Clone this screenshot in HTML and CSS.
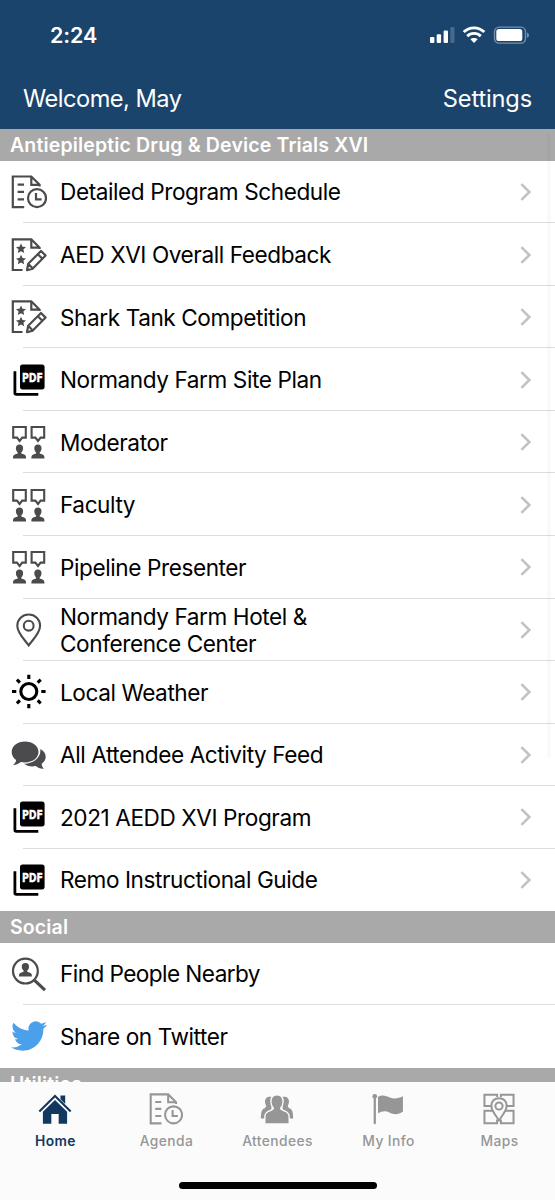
FILE: index.html
```html
<!DOCTYPE html>
<html lang="en">
<head>
<meta charset="utf-8">
<title>Event Home</title>
<link rel="stylesheet" href="styles.css">
</head>
<body>
<svg class="sprite" aria-hidden="true">
  <symbol id="agenda" viewBox="0 0 36 36">
    <g fill="none" stroke="currentColor" stroke-width="2.2">
      <path d="M13.2 33.2H1.8V2.5H20.3L28.6 10.8V12.6M20.3 2.5V10.8H28.6M6.6 10.6H13M6.6 17.9H13M6.6 25.4H13"/>
      <circle cx="26" cy="24.2" r="9"/>
      <path d="M25 19V25.4H30.6"/>
    </g>
  </symbol>
  <symbol id="survey" viewBox="0 0 36 36">
    <path fill="none" stroke="currentColor" stroke-width="2.2" d="M11.5 33H1.8V2.3H20.3L28.6 10.6V12M20.3 2.3V10.6H28.6"/>
    <path id="star" fill="currentColor" d="M10 6.5l1.5 3.2 3.5.4-2.6 2.4.8 3.5-3.2-1.8-3.2 1.8.8-3.5-2.6-2.4 3.5-.4z"/>
    <use href="#star" y="11.3"/>
    <path fill="none" stroke="currentColor" stroke-width="2.2" stroke-linejoin="round" d="M16 33.2L17.2 26.8L30 14L34.6 18.6L21.8 31.6ZM17.2 26.8L21.8 31.6M26.8 17.2L31.4 21.8"/>
  </symbol>
  <symbol id="pdf" viewBox="0 0 36 36">
    <rect x="9" y="2.4" width="24.6" height="25" rx="2.6"/>
    <path fill="none" stroke="#000" stroke-width="2.8" d="M3.9 9.2V31Q3.9 32.3 5.2 32.3H27.3"/>
  </symbol>
  <symbol id="speakers" viewBox="0 0 36 36">
    <g id="speaker">
      <path fill="none" stroke="currentColor" stroke-width="2.1" d="M2.2 3H14.8V13.6H11.2L8.6 17L6 13.6H2.2Z"/>
      <path fill="currentColor" d="M8.5 20.6c2.6 0 3.7 1.7 3.6 3.9c-.1 1.9-1 3.2-1.8 4.1v.8c1.9.7 4.3 1.1 4.6 3l.2 2H1.9l.2-2c.3-1.9 2.7-2.3 4.6-3v-.8c-.8-.9-1.7-2.2-1.8-4.1c-.1-2.2 1-3.9 3.6-3.9z"/>
    </g>
    <use href="#speaker" x="18.4"/>
  </symbol>
  <symbol id="pin" viewBox="0 0 36 36">
    <g fill="none" stroke="currentColor" stroke-width="2.1">
      <path d="M17.7 33.4C13.5 27.5 6.3 21 6.3 13.7C6.3 7.3 11.4 2.5 17.7 2.5S29.1 7.3 29.1 13.7C29.1 21 21.9 27.5 17.7 33.4Z"/>
      <circle cx="17.7" cy="13.7" r="4.9"/>
    </g>
  </symbol>
  <symbol id="sun" viewBox="0 0 36 36">
    <g fill="none" stroke="#000" stroke-width="3.1">
      <circle cx="17.8" cy="17.5" r="8"/>
      <path d="M17.8 .7V5M17.8 30V34.3M1 17.5H5.3M30.3 17.5H34.6M5.9 5.6L8.9 8.6M26.7 26.4L29.7 29.4M5.9 29.4L8.9 26.4M26.7 8.6L29.7 5.6"/>
    </g>
  </symbol>
  <symbol id="chat" viewBox="0 0 36 36">
    <path fill="currentColor" d="M29.2 12.1C32.7 13.9 34.7 16.6 34.7 19.8C34.7 22.7 33.2 25 30.6 26.7C30.8 29 31.6 30.5 33.1 31.6C29.8 32 27.1 31 24.6 29.1C20 30 15.8 29 13 26.8C22 26.8 30.7 20.4 29.2 12.1Z"/>
    <path fill="currentColor" d="M14 4.6C21.6 4.6 27.5 9.1 27.5 15S21.6 25.4 14 25.4C12.5 25.4 11.1 25.2 9.8 24.9C7.5 27 5 28 2.1 28C3.8 26.6 4.9 25.1 5.1 23C2.4 21.2 .7 18.3 .7 15C.7 9.1 6.4 4.6 14 4.6Z"/>
  </symbol>
  <symbol id="find" viewBox="0 0 36 36">
    <circle cx="14.4" cy="15.1" r="12.4" fill="none" stroke="currentColor" stroke-width="2.2"/>
    <path fill="none" stroke="currentColor" stroke-width="3.2" d="M23.6 24.4L34 34.2"/>
    <path fill="currentColor" d="M14.4 7c2.6 0 3.7 1.7 3.6 3.9c-.1 1.7-1 2.9-1.8 3.7v1.2c1.9.7 4.2 1 4.5 2.7l.2 2H7.9l.2-2c.3-1.7 2.6-2 4.5-2.7v-1.2c-.8-.8-1.7-2-1.8-3.7C10.7 8.7 11.8 7 14.4 7z"/>
  </symbol>
  <symbol id="bird" viewBox="0 0 24 24">
    <path fill="#4aa0eb" d="M23.953 4.57a10 10 0 01-2.825.775 4.958 4.958 0 002.163-2.723c-.951.555-2.005.959-3.127 1.184a4.92 4.92 0 00-8.384 4.482C7.69 8.095 4.067 6.13 1.64 3.162a4.822 4.822 0 00-.666 2.475c0 1.71.87 3.213 2.188 4.096a4.904 4.904 0 01-2.228-.616v.06a4.923 4.923 0 003.946 4.827 4.996 4.996 0 01-2.212.085 4.936 4.936 0 004.604 3.417 9.867 9.867 0 01-6.102 2.105c-.39 0-.779-.023-1.17-.067a13.995 13.995 0 007.557 2.209c9.053 0 13.998-7.496 13.998-13.985 0-.21 0-.42-.015-.63A9.935 9.935 0 0024 4.59z"/>
  </symbol>
  <symbol id="chevron" viewBox="0 0 12 18">
    <path fill="none" stroke="#c2c2c4" stroke-width="2.5" d="M1.4 1.2L9.4 9L1.4 16.8"/>
  </symbol>
  <symbol id="home" viewBox="0 0 36 36">
    <path fill="none" stroke="currentColor" stroke-width="2.2" d="M1.4 20.6L18 4.2L34.6 20.6"/>
    <path fill="currentColor" d="M23.8 3.6H28.8V12.6L23.8 7.6ZM18 8.4L30.8 20.8V33.6H21.9V23.4H14.1V33.6H5.2V20.8Z"/>
  </symbol>
  <symbol id="people" viewBox="0 0 36 36">
    <path id="sidePerson" fill="currentColor" d="M12.5 5.3C8.1 3.9 5.2 6.4 5.3 10.2C5.4 12.6 6.6 13.6 6.5 15.2C6.2 17.4 3 17.4 1.9 20.1C1.1 22.1 .9 25 .9 28H5L12 19Z"/>
    <use href="#sidePerson" transform="translate(36 0) scale(-1 1)"/>
    <path fill="currentColor" stroke="#fbfbfb" stroke-width="3" paint-order="stroke" d="M18 3.6C21.9 3.6 23.9 6.5 23.7 10.5C23.6 13.6 22 15.5 21.1 16.9C21.1 21 29.4 19.7 30 25L30.3 33H5.7L6 25C6.6 19.7 14.9 21 14.9 16.9C14 15.5 12.4 13.6 12.3 10.5C12.1 6.5 14.1 3.6 18 3.6Z"/>
  </symbol>
  <symbol id="flag" viewBox="0 0 36 36">
    <circle cx="4" cy="4.6" r="2.5" fill="currentColor"/>
    <path fill="none" stroke="currentColor" stroke-width="2.4" stroke-linecap="round" d="M4 5V33"/>
    <path fill="currentColor" d="M7.4 5.4C12 2.4 16 4.2 20 5.9C24.5 7.7 29 6.8 33.8 4.6V20.7C28.4 24.7 23.6 23.7 19.5 21.7C15.4 19.6 11.2 20.4 7.4 22.6Z"/>
  </symbol>
  <symbol id="map" viewBox="0 0 36 36">
    <g fill="none" stroke="currentColor" stroke-width="2.1">
      <path d="M10.8 14.8H2.6V3H16V5.4M20 5.4V3H33.4V14.8H25.2M11.4 19.8H2.6V33H16V29M24.6 19.8H33.4V33H20V29"/>
      <path d="M18 30C15 25.5 9.8 19.7 9.8 14.6C9.8 9.8 13.3 6.5 18 6.5S26.2 9.8 26.2 14.6C26.2 19.7 21 25.5 18 30Z"/>
      <circle cx="18" cy="14.8" r="3.8"/>
    </g>
  </symbol>
</svg>
<div class="screen">
  <header class="top">
    <div class="status">
      <span class="time">2:24</span>
      <svg class="status-icons" viewBox="0 0 100 20">
        <g fill="#fff">
          <rect x="0" y="12" width="4.4" height="6" rx="1.1"/><rect x="6.7" y="9.2" width="4.4" height="8.8" rx="1.1"/><rect x="13.6" y="5.6" width="4.4" height="12.4" rx="1.1"/>
          <rect x="20.3" y="2" width="4.2" height="16" rx="1.1" opacity=".2"/>
          <path d="M44 18L40.4 14.3C42.2 12.5 45.8 12.5 47.6 14.3Z"/>
        </g>
        <path fill="none" stroke="#fff" stroke-width="2.9" d="M33.7 7.1C39.3 1.4 48.7 1.4 54.3 7.1M37.2 11.1C41 7.4 47 7.4 50.8 11.1"/>
        <rect x="64.5" y="2.1" width="31" height="16" rx="4.6" fill="none" stroke="#7590aa" stroke-width="1.4"/>
        <rect x="66.3" y="4.1" width="26" height="12" rx="2.6" fill="#fff"/>
        <path fill="#7590aa" d="M97 7.6Q99 8.2 99 10.2T97 12.8Z"/>
      </svg>
    </div>
    <nav class="nav"><span class="welcome">Welcome, May</span><span class="settings">Settings</span></nav>
  </header>
  <main class="content">
    <h2 class="section">Antiepileptic Drug &amp; Device Trials XVI</h2>
    <ul class="list">
      <li class="row"><svg class="icon"><use href="#agenda"/></svg><span class="label">Detailed Program Schedule</span><svg class="chev"><use href="#chevron"/></svg></li>
      <li class="row"><svg class="icon"><use href="#survey"/></svg><span class="label">AED XVI Overall Feedback</span><svg class="chev"><use href="#chevron"/></svg></li>
      <li class="row"><svg class="icon"><use href="#survey"/></svg><span class="label">Shark Tank Competition</span><svg class="chev"><use href="#chevron"/></svg></li>
      <li class="row"><svg class="icon"><use href="#pdf"/><text class="pdf-text" x="11" y="19.5" textLength="21" lengthAdjust="spacingAndGlyphs">PDF</text></svg><span class="label">Normandy Farm Site Plan</span><svg class="chev"><use href="#chevron"/></svg></li>
      <li class="row"><svg class="icon"><use href="#speakers"/></svg><span class="label">Moderator</span><svg class="chev"><use href="#chevron"/></svg></li>
      <li class="row"><svg class="icon"><use href="#speakers"/></svg><span class="label">Faculty</span><svg class="chev"><use href="#chevron"/></svg></li>
      <li class="row"><svg class="icon"><use href="#speakers"/></svg><span class="label">Pipeline Presenter</span><svg class="chev"><use href="#chevron"/></svg></li>
      <li class="row"><svg class="icon"><use href="#pin"/></svg><span class="label">Normandy Farm Hotel &amp;<br>Conference Center</span><svg class="chev"><use href="#chevron"/></svg></li>
      <li class="row"><svg class="icon"><use href="#sun"/></svg><span class="label">Local Weather</span><svg class="chev"><use href="#chevron"/></svg></li>
      <li class="row"><svg class="icon"><use href="#chat"/></svg><span class="label">All Attendee Activity Feed</span><svg class="chev"><use href="#chevron"/></svg></li>
      <li class="row"><svg class="icon"><use href="#pdf"/><text class="pdf-text" x="11" y="19.5" textLength="21" lengthAdjust="spacingAndGlyphs">PDF</text></svg><span class="label">2021 AEDD XVI Program</span><svg class="chev"><use href="#chevron"/></svg></li>
      <li class="row"><svg class="icon"><use href="#pdf"/><text class="pdf-text" x="11" y="19.5" textLength="21" lengthAdjust="spacingAndGlyphs">PDF</text></svg><span class="label">Remo Instructional Guide</span><svg class="chev"><use href="#chevron"/></svg></li>
    </ul>
    <h2 class="section">Social</h2>
    <ul class="list">
      <li class="row"><svg class="icon"><use href="#find"/></svg><span class="label tight">Find People Nearby</span></li>
      <li class="row"><svg class="icon"><use href="#bird"/></svg><span class="label">Share on Twitter</span></li>
    </ul>
    <h2 class="section">Utilities</h2>
    <div class="scrollbar"></div>
  </main>
  <footer class="tabbar">
    <div class="tabs">
      <div class="tab active"><svg class="tab-icon"><use href="#home"/></svg><span>Home</span></div>
      <div class="tab"><svg class="tab-icon"><use href="#agenda"/></svg><span>Agenda</span></div>
      <div class="tab"><svg class="tab-icon"><use href="#people"/></svg><span>Attendees</span></div>
      <div class="tab"><svg class="tab-icon"><use href="#flag"/></svg><span>My Info</span></div>
      <div class="tab"><svg class="tab-icon"><use href="#map"/></svg><span>Maps</span></div>
    </div>
    <div class="home-indicator"></div>
  </footer>
</div>
</body>
</html>
```
FILE: styles.css
```css
* { box-sizing: border-box; }
body {
  margin: 0;
  font-family: Inter, "Liberation Sans", sans-serif;
  color: #000;
  background: #fff;
}
.sprite { position: absolute; width: 0; height: 0; }
.screen { width: 555px; height: 1200px; display: flex; flex-direction: column; overflow: hidden; }
.top { height: 129.4px; flex: none; background: #1b446c; color: #fff; }
.status { height: 67px; padding: 3px 27px 0 50px; display: flex; align-items: center; justify-content: space-between; }
.time { font-size: 21.5px; font-weight: 600; letter-spacing: -0.1px; }
.status-icons { width: 100px; height: 20px; display: block; margin-right: -2px; }
.nav { height: 62px; padding: 0 23px; display: flex; align-items: center; justify-content: space-between; font-size: 23.6px; font-weight: 400; }
.welcome { letter-spacing: -0.5px; }
.settings { letter-spacing: -0.15px; }
.content { position: relative; flex: 1; min-height: 0; overflow: hidden; }
.section {
  margin: 0;
  height: 31.3px;
  padding-left: 10px;
  line-height: 32px;
  background: #a9a9a9;
  color: #fff;
  font-size: 19.5px;
  font-weight: 600;
  letter-spacing: 0.15px;
}
.list { margin: 0; padding: 0; list-style: none; }
.row {
  height: 62.56px;
  padding: 0 23px 0 11px;
  display: flex;
  align-items: center;
  background: linear-gradient(#dedede, #dedede) 23px 100% / 100% 1px no-repeat;
}
.row:last-child { background: none; }
.icon { width: 36px; height: 36px; flex: none; color: #4b4b4d; overflow: visible; }
.label { flex: 1; margin-left: 13px; font-size: 22.6px; line-height: 27px; letter-spacing: -0.42px; }
.label.tight { letter-spacing: -0.57px; }
.chev { width: 12px; height: 18px; flex: none; }
.pdf-text { font: 700 12px "DejaVu Sans", sans-serif; fill: #fff; stroke: #fff; stroke-width: 0.4px; }
.scrollbar { position: absolute; top: 4px; right: 4px; width: 4px; height: 625px; border-radius: 2px; background: rgba(0, 0, 0, 0.02); }
.tabbar { height: 118px; flex: none; background: #fbfbfb; display: flex; flex-direction: column; align-items: center; }
.tabs { width: 100%; display: grid; grid-template-columns: repeat(5, 1fr); }
.tab { display: flex; flex-direction: column; align-items: center; padding-top: 10px; gap: 6px; color: #969696; font-size: 13.8px; font-weight: 500; line-height: 18px; letter-spacing: 0.4px; }
.tab.active { color: #133860; font-weight: 600; }
.tab-icon { width: 34px; height: 34px; margin-right: 1px; }
.home-indicator { margin-top: 32px; width: 198px; height: 7px; border-radius: 4px; background: #000; }
```
